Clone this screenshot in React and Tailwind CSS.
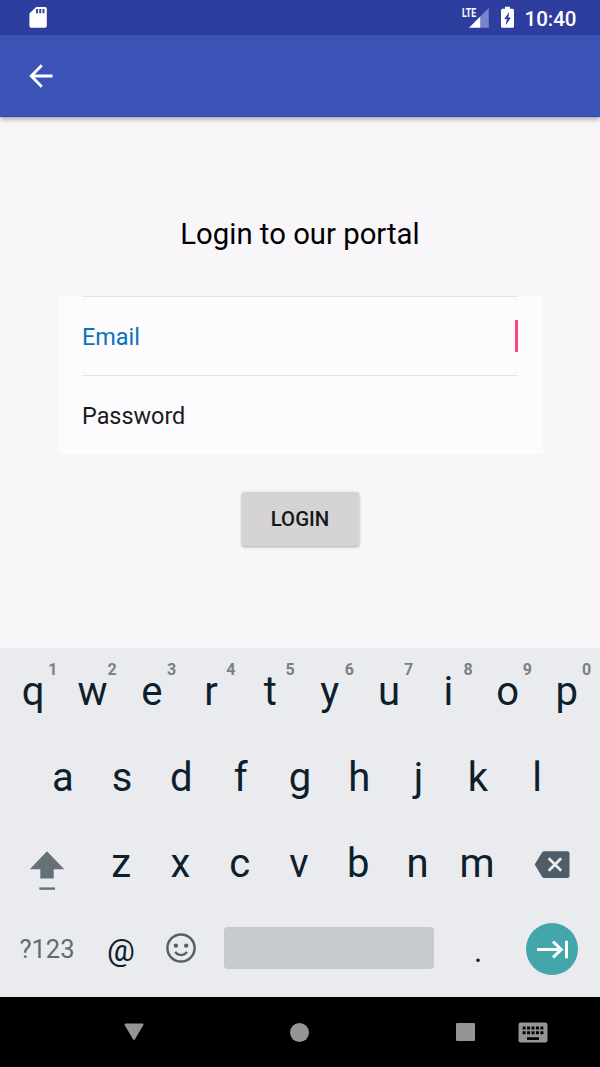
import React from "react";

const topRow = [
  ["q", "1"], ["w", "2"], ["e", "3"], ["r", "4"], ["t", "5"],
  ["y", "6"], ["u", "7"], ["i", "8"], ["o", "9"], ["p", "0"],
];
const homeRow = ["a", "s", "d", "f", "g", "h", "j", "k", "l"];
const bottomRow = ["z", "x", "c", "v", "b", "n", "m"];

function Key({ label, hint }) {
  return (
    <button className="relative flex h-[86px] w-[59.3px] shrink-0 items-center justify-center pt-[2px] text-[40px] leading-none">
      {label}
      {hint && (
        <span className="absolute top-[13px] left-[39.4px] w-5 text-center text-base leading-[18px] font-bold text-[#7b8084]">
          {hint}
        </span>
      )}
    </button>
  );
}

function StatusBar() {
  return (
    <div className="flex h-[35px] items-center bg-[#2d3e9f] text-white">
      <svg className="ml-[29px] h-[35px] w-[18px]" viewBox="0 0 18 35" fill="none">
        <path d="M7.2 7H16a1.8 1.8 0 0 1 1.8 1.8V26a1.8 1.8 0 0 1-1.8 1.8H2.2A1.8 1.8 0 0 1 .4 26V13.5Z" fill="#fff" />
        <path d="M8 9v4.3M11.2 9v4.3M14.4 9v4.3" stroke="#2d3e9f" strokeWidth="1.9" />
      </svg>
      <div className="ml-auto flex h-[35px] items-center">
        <div className="relative h-[35px] w-[27px]">
          <svg className="h-[35px] w-[27px]" viewBox="0 0 27 35">
            <path d="M25.800 8v19.700H17V16.700Z" fill="#7a84c6" />
            <path d="M17.200 16.600v11.100H6Z" fill="#fff" />
          </svg>
          <span className="absolute top-[6px] left-[-1px] origin-left scale-x-[0.65] text-[13.5px] leading-[12px] font-bold">
            LTE
          </span>
        </div>
        <svg className="ml-[11px] h-[35px] w-[13px]" viewBox="0 0 13 35">
          <path d="M4 6.7h5v2h2.5A1.5 1.5 0 0 1 13 10.200V26.200A1.500 1.500 0 0 1 11.500 27.700H1.500A1.500 1.500 0 0 1 0 26.200V10.200A1.500 1.500 0 0 1 1.500 8.700H4Z" fill="#fff" />
          <path d="M8.200 12 3.200 19h2.500l-.9 6.300L9.900 17.600H7.300Z" fill="#2d3e9f" />
        </svg>
        <span className="ml-[10.5px] w-[75.5px] pt-[3px] text-[20.5px] leading-none font-medium">10:40</span>
      </div>
    </div>
  );
}

function Keyboard() {
  return (
    <div className="h-[349px] bg-[#eaebef] text-[#0c202b]">
      <div className="flex justify-center">
        {topRow.map(([label, hint]) => <Key key={label} label={label} hint={hint} />)}
      </div>
      <div className="flex justify-center">
        {homeRow.map((label) => <Key key={label} label={label} />)}
      </div>
      <div className="flex pl-[2px]">
        <button className="flex h-[86px] w-[89.5px] items-center justify-center" aria-label="Shift">
          <svg className="h-[86px] w-[36px]" viewBox="0 0 36 86" fill="#667079">
            <path d="M18 31.200 35.200 49.200H24.700V58.500H11.300V49.200H.8Z" />
            <path d="M10.300 67.400h15.700v2.400H10.300Z" />
          </svg>
        </button>
        {bottomRow.map((label) => <Key key={label} label={label} />)}
        <button className="flex h-[86px] w-[91px] items-center justify-center" aria-label="Backspace">
          <svg className="h-[86px] w-[36px]" viewBox="0 0 36 86" fill="none">
            <path d="M10.500 31.200H33.500a2 2 0 0 1 2 2V56a2 2 0 0 1-2 2H10.500a3 3 0 0 1-2.500-1.300L.7 44.600 8 32.500a3 3 0 0 1 2.500-1.300Z" fill="#4f5d68" />
            <path d="m14.700 38.200 12.500 12.600M27.200 38.200 14.700 50.800" stroke="#eaebef" strokeWidth="2.700" />
          </svg>
        </button>
      </div>
      <div className="flex h-[86px] items-center">
        <button className="ml-[3px] w-[88px] pt-px text-[25.5px] leading-none text-[#5f6b73]">?123</button>
        <button className="w-[60px] pt-[2px] text-[31px] leading-none">@</button>
        <button className="flex w-[59px] justify-center" aria-label="Emoji">
          <svg className="h-[30px] w-[30px] -translate-y-[1px]" viewBox="0 0 30 30" fill="none">
            <circle cx="15" cy="15" r="13.600" stroke="#535f69" strokeWidth="2.500" />
            <circle cx="9.900" cy="12.600" r="2.200" fill="#535f69" />
            <circle cx="20.200" cy="12.600" r="2.200" fill="#535f69" />
            <path d="M9.200 18.800c2.500 4.400 9.200 4.400 11.700 0" stroke="#535f69" strokeWidth="2.200" />
          </svg>
        </button>
        <button className="ml-[14px] h-[42px] w-[210px] -translate-y-[1px] rounded-[4px] bg-[#c7cacf]" aria-label="Space" />
        <button className="ml-[14px] w-[60px] pt-[5px] text-[31px] leading-none">.</button>
        <button className="ml-[18px] flex h-[52px] w-[52px] items-center justify-center rounded-full bg-[#43a6aa]" aria-label="Next field">
          <svg className="h-[52px] w-[52px]" viewBox="0 0 52 52" fill="none" stroke="#fff" strokeWidth="3">
            <path d="M11 26.500H35M27 18.700l8.300 7.800-8.300 7.800M40.500 17.800v17.400" />
          </svg>
        </button>
      </div>
    </div>
  );
}

function NavigationBar() {
  return (
    <div className="flex h-[70px] items-center bg-black">
      <svg className="ml-[124px] h-5 w-5" viewBox="0 0 20 20" fill="#979498">
        <path d="M1.300 1.500H18.700q1.300.3.700 1.500L11 17.300q-1 1.400-2 0L.6 3Q0 1.800 1.300 1.500Z" />
      </svg>
      <div className="ml-[146px] h-[19px] w-[19px] rounded-full bg-[#979498]" />
      <div className="ml-[147px] h-[18px] w-[19px] rounded-[1px] bg-[#979498]" />
      <svg className="ml-[43px] h-[21px] w-[30px]" viewBox="0 0 30 21">
        <rect x=".5" y=".5" width="29" height="20" rx="2.200" fill="#979498" />
        <path d="M4.600 6h21.600M4.600 10.700h21.600" stroke="#000" strokeWidth="3" strokeDasharray="3 1.450" />
        <path d="M9 16.600h12" stroke="#000" strokeWidth="2.700" />
      </svg>
    </div>
  );
}

export default function App() {
  return (
    <div className="flex h-[1067px] w-[600px] flex-col overflow-hidden bg-[#f8f6f9] font-['Roboto',sans-serif]">
      <StatusBar />
      <header className="flex h-[82px] shrink-0 items-center border-b border-[#3048a8] bg-[#3b53b6] shadow-[0_2px_5px_rgba(0,0,0,0.35)]">
        <button className="ml-[29px]" aria-label="Back">
          <svg className="h-6 w-6" viewBox="0 0 24 24" fill="none" stroke="#fff" strokeWidth="2.800">
            <path d="M23.500 12H2.500M12.800 1.300 2.200 12l10.600 10.700" />
          </svg>
        </button>
      </header>
      <main className="flex h-[531px] flex-col items-center">
        <h1 className="mt-[97px] text-[29.3px] leading-[40px] text-black">Login to our portal</h1>
        <div className="mt-[42px] ml-[2px] h-[158px] w-[484px] bg-[#fdfbfe] pr-[25px] pl-[23px] text-[23.4px]">
          <div className="flex h-[79px] items-center justify-between border-t border-[#e5e3e6] text-[#0873bd]">
            <span className="pt-[4px]">Email</span>
            <span className="h-8 w-[3px] bg-[#f44a7c]" />
          </div>
          <div className="flex h-[79px] items-center border-t border-[#e5e3e6] pt-[4px] text-[#1b1b1d]">Password</div>
        </div>
        <button className="mt-[38px] h-[54px] w-[117px] rounded-[3px] bg-[#d5d3d6] pt-px text-[20.4px] font-medium text-[#161618] shadow-[0_1px_3px_rgba(0,0,0,0.35)]">
          LOGIN
        </button>
      </main>
      <Keyboard />
      <NavigationBar />
    </div>
  );
}
